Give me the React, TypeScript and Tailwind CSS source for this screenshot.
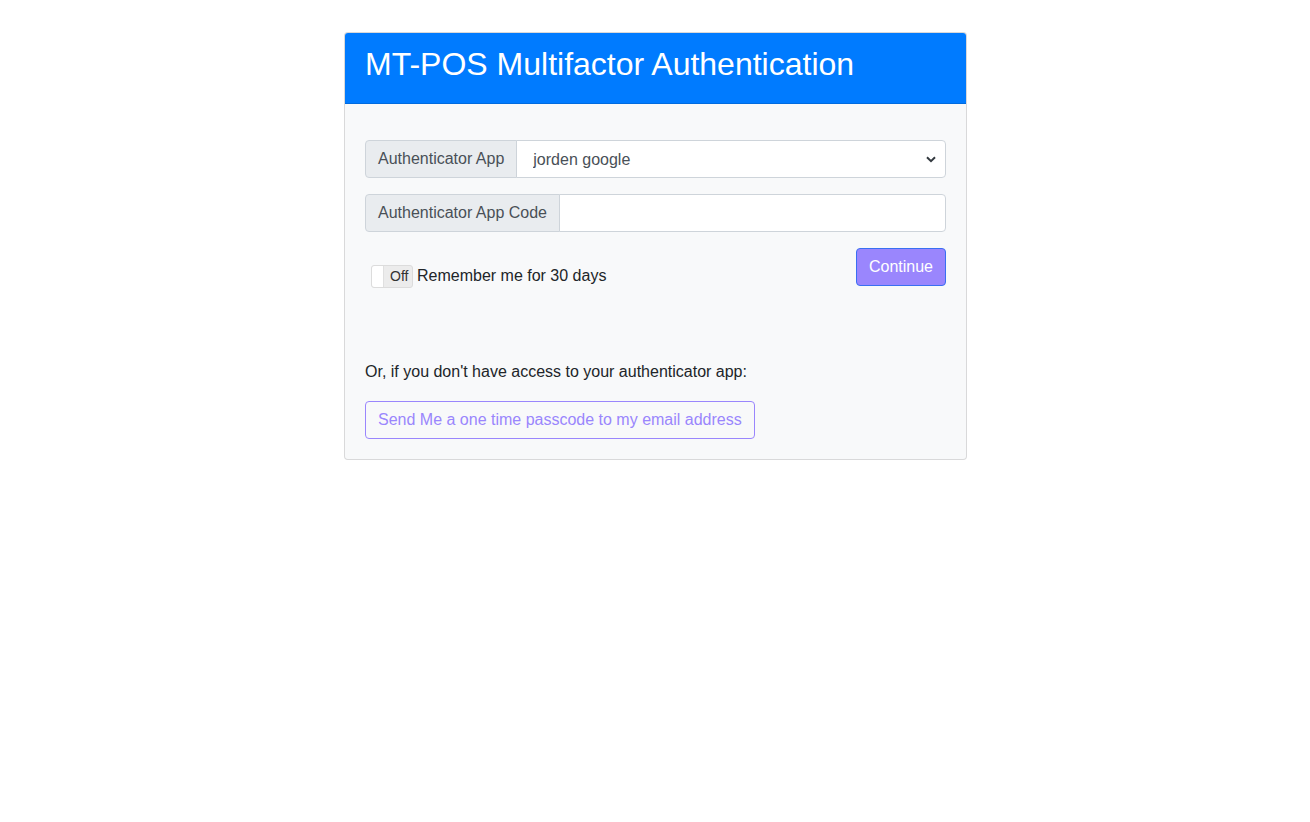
import React from "react";

export default function App() {
  return (
    <div
      className="min-h-[822px] w-full bg-white text-[#212529]"
      style={{ fontFamily: '"Liberation Sans", Arial, sans-serif' }}
    >
      <div className="flex justify-center pt-[32px] pl-[1px]">
        <div className="w-[623px] rounded-[4px] border border-[rgba(0,0,0,0.125)] bg-[#f8f9fa] overflow-hidden">
          <div className="bg-[#007bff] px-[20px] pt-[12px] pb-[12px] border-b border-[rgba(0,0,0,0.125)]">
            <h2 className="text-[32px] leading-[38.4px] font-normal text-white mb-[8px]">
              MT-POS Multifactor Authentication
            </h2>
          </div>
          <div className="px-[20px] pt-[36px] pb-[20px]">
            <div className="flex h-[38px] mb-[16px]">
              <div className="flex items-center px-[12px] bg-[#e9ecef] border border-[#ced4da] rounded-l-[4px] text-[16px] text-[#495057] whitespace-nowrap">
                Authenticator App
              </div>
              <div className="relative flex-1 -ml-px">
                <select
                  defaultValue="jorden"
                  className="h-full w-full appearance-none bg-white border border-[#ced4da] rounded-r-[4px] pl-[16px] pr-[28px] pt-[1px] text-[16px] text-[#495057] outline-none"
                  style={{ fontFamily: '"Liberation Sans", Arial, sans-serif' }}
                >
                  <option value="jorden">jorden google</option>
                </select>
                <svg
                  className="pointer-events-none absolute right-[10px] top-[16px]"
                  width="10"
                  height="7"
                  viewBox="0 0 10 7"
                >
                  <path d="M1 1.2 L5 5.2 L9 1.2" fill="none" stroke="#343a40" strokeWidth="2" />
                </svg>
              </div>
            </div>
            <div className="flex h-[38px] mb-[16px]">
              <div className="flex items-center px-[12px] bg-[#e9ecef] border border-[#ced4da] rounded-l-[4px] text-[16px] text-[#495057] whitespace-nowrap">
                Authenticator App Code
              </div>
              <input
                type="text"
                className="flex-1 -ml-px h-full bg-white border border-[#ced4da] rounded-r-[4px] px-[12px] text-[16px] text-[#495057] outline-none"
              />
            </div>
            <div className="flex justify-between items-start h-[38px]">
              <div className="flex items-center mt-[16px] ml-[6px]">
                <div className="relative flex items-center w-[42px] h-[23px] rounded-[3px] border border-[#dcdcdc] bg-[#ececec]">
                  <div className="absolute left-0 top-0 h-full w-[12px] rounded-l-[3px] bg-white border-r border-[#e0e0e0]" />
                  <span className="ml-[18px] text-[14px] leading-none text-[#333]">Off</span>
                </div>
                <span className="ml-[4px] text-[16px] leading-[24px] text-[#212529]">
                  Remember me for 30 days
                </span>
              </div>
              <button className="h-[38px] px-[12px] rounded-[4px] border border-[#3a6ff2] bg-[#9a86fd] text-white text-[16px]">
                Continue
              </button>
            </div>
            <p className="mt-[74px] mb-[17px] text-[16px] leading-[24px] text-[#212529]">
              Or, if you don't have access to your authenticator app:
            </p>
            <button className="h-[38px] px-[12px] rounded-[4px] border border-[#9a86fd] bg-transparent text-[#9a86fd] text-[16px]">
              Send Me a one time passcode to my email address
            </button>
          </div>
        </div>
      </div>
    </div>
  );
}
